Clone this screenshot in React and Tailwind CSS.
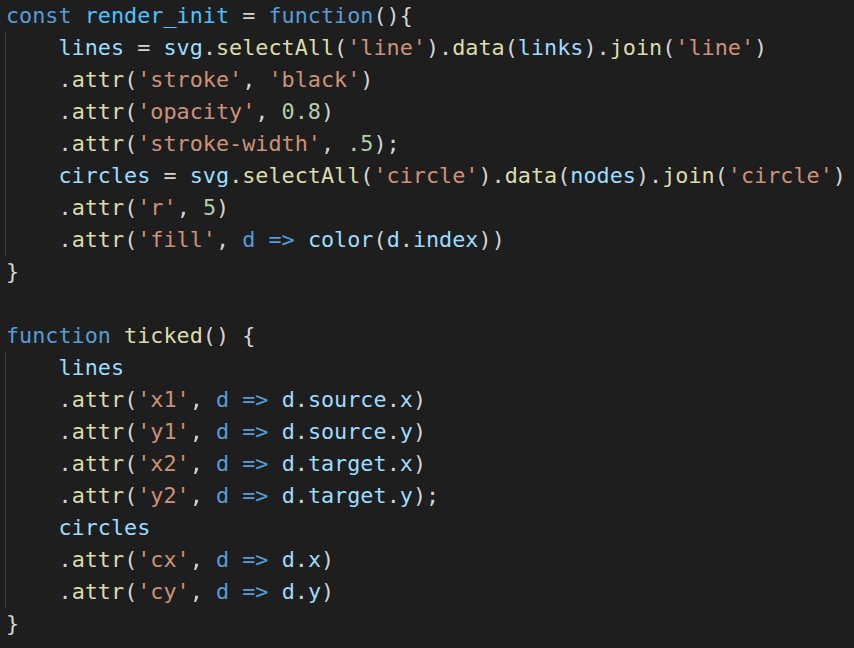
import React from 'react';

const C = {
  kw: 'text-[#569cd6]',
  cst: 'text-[#4fc1ff]',
  v: 'text-[#9cdcfe]',
  fn: 'text-[#dcdcaa]',
  str: 'text-[#ce9178]',
  num: 'text-[#b5cea8]',
  p: 'text-[#d4d4d4]',
};

// token helpers
const t = (cls, text) => ({ cls, text });
const attr = (name, ...rest) => [t(C.p, '    .'), t(C.fn, 'attr'), t(C.p, '('), t(C.str, `'${name}'`), t(C.p, ', '), ...rest, t(C.p, ')')];
const arrow = (...rest) => [t(C.kw, 'd'), t(C.p, ' '), t(C.kw, '=>'), t(C.p, ' '), ...rest];

const block1 = [
  [t(C.p, '    '), t(C.v, 'lines'), t(C.p, ' = '), t(C.v, 'svg'), t(C.p, '.'), t(C.fn, 'selectAll'), t(C.p, '('), t(C.str, "'line'"), t(C.p, ').'), t(C.fn, 'data'), t(C.p, '('), t(C.v, 'links'), t(C.p, ').'), t(C.fn, 'join'), t(C.p, '('), t(C.str, "'line'"), t(C.p, ')')],
  attr('stroke', t(C.str, "'black'")),
  attr('opacity', t(C.num, '0.8')),
  [...attr('stroke-width', t(C.num, '.5')), t(C.p, ';')],
  [t(C.p, '    '), t(C.v, 'circles'), t(C.p, ' = '), t(C.v, 'svg'), t(C.p, '.'), t(C.fn, 'selectAll'), t(C.p, '('), t(C.str, "'circle'"), t(C.p, ').'), t(C.fn, 'data'), t(C.p, '('), t(C.v, 'nodes'), t(C.p, ').'), t(C.fn, 'join'), t(C.p, '('), t(C.str, "'circle'"), t(C.p, ')')],
  attr('r', t(C.num, '5')),
  attr('fill', ...arrow(t(C.v, 'color'), t(C.p, '('), t(C.v, 'd'), t(C.p, '.'), t(C.v, 'index'), t(C.p, ')'))),
];

const block2 = [
  [t(C.p, '    '), t(C.v, 'lines')],
  attr('x1', ...arrow(t(C.v, 'd'), t(C.p, '.'), t(C.v, 'source'), t(C.p, '.'), t(C.v, 'x'))),
  attr('y1', ...arrow(t(C.v, 'd'), t(C.p, '.'), t(C.v, 'source'), t(C.p, '.'), t(C.v, 'y'))),
  attr('x2', ...arrow(t(C.v, 'd'), t(C.p, '.'), t(C.v, 'target'), t(C.p, '.'), t(C.v, 'x'))),
  [...attr('y2', ...arrow(t(C.v, 'd'), t(C.p, '.'), t(C.v, 'target'), t(C.p, '.'), t(C.v, 'y'))), t(C.p, ';')],
  [t(C.p, '    '), t(C.v, 'circles')],
  attr('cx', ...arrow(t(C.v, 'd'), t(C.p, '.'), t(C.v, 'x'))),
  attr('cy', ...arrow(t(C.v, 'd'), t(C.p, '.'), t(C.v, 'y'))),
];

function Line({ tokens, className = '' }) {
  return (
    <div className={`h-8 leading-8 whitespace-pre ${className}`}>
      {tokens.length === 0 ? ' ' : tokens.map((tok, i) => (
        <span key={i} className={tok.cls}>{tok.text}</span>
      ))}
    </div>
  );
}

function Block({ lines }) {
  return (
    <div className="border-l border-[#404040]">
      {lines.map((l, i) => <Line key={i} tokens={l} />)}
    </div>
  );
}

export default function App() {
  return (
    <div
      className="w-[854px] h-[648px] bg-[#1e1e1e] pl-[5px] overflow-hidden text-[21.8px] text-[#d4d4d4]"
      style={{ fontFamily: '"DejaVu Sans Mono", monospace' }}
    >
      <Line className="pl-px" tokens={[t(C.kw, 'const'), t(C.p, ' '), t(C.cst, 'render_init'), t(C.p, ' = '), t(C.kw, 'function'), t(C.p, '(){')]} />
      <Block lines={block1} />
      <Line className="pl-px" tokens={[t(C.p, '}')]} />
      <Line tokens={[]} />
      <Line className="pl-px" tokens={[t(C.kw, 'function'), t(C.p, ' '), t(C.fn, 'ticked'), t(C.p, '() {')]} />
      <Block lines={block2} />
      <Line className="pl-px" tokens={[t(C.p, '}')]} />
    </div>
  );
}
